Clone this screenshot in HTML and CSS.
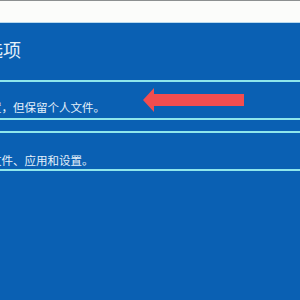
FILE: index.html
```html
<!DOCTYPE html>
<html lang="zh-CN">
<head>
  <meta charset="UTF-8" />
  <title>选择一个选项</title>
  <link rel="stylesheet" href="styles.css">
</head>
<body>

<div class="topbar"></div>

<div class="panel">
  <h1 class="title">选择一个选项</h1>

  <div class="option">
    <p class="desc">删除应用和设置，但保留个人文件。</p>
  </div>

  <div class="option second">
    <p class="desc">删除所有个人文件、应用和设置。</p>
  </div>

  <svg class="arrow" width="104" height="28" viewBox="0 0 104 28">
    <polygon points="0,13 11,1 11,7 101,7 101,19 11,19 11,25" fill="#f24d4f" />
  </svg>
</div>

</body>
</html>
```

FILE: styles.css
```css
body {
  margin: 0;
  width: 300px;
  height: 300px;
  overflow: hidden;
  background-color: #0a60b3;
  font-family: "Noto Sans CJK SC", "Noto Sans", sans-serif;
  color: #e4f0fa;
}
.topbar {
  height: 21px;
  background-color: #fbfcfa;
  border-top: 1px solid #8c9090;
  border-bottom: 1px solid #b9d9ee;
}
.panel {
  position: relative;
  padding-top: 14px;
}
.title {
  margin: 0 0 19px -87px;
  font-size: 18px;
  font-weight: normal;
  line-height: 24px;
  white-space: nowrap;
}
.option {
  height: 36px;
  border-top: 2px solid #8ee6ec;
  border-bottom: 2px solid #8ee6ec;
  padding-top: 16px;
  box-sizing: content-box;
}
.option.second {
  margin-top: 11px;
  padding-top: 18px;
}
.desc {
  margin: 0 0 0 -79px;
  font-size: 11.5px;
  line-height: 18px;
  white-space: nowrap;
}
.option {
  height: 20px;
}
.option.second {
  height: 18px;
}
.arrow {
  position: absolute;
  left: 143px;
  top: 64px;
}
```
